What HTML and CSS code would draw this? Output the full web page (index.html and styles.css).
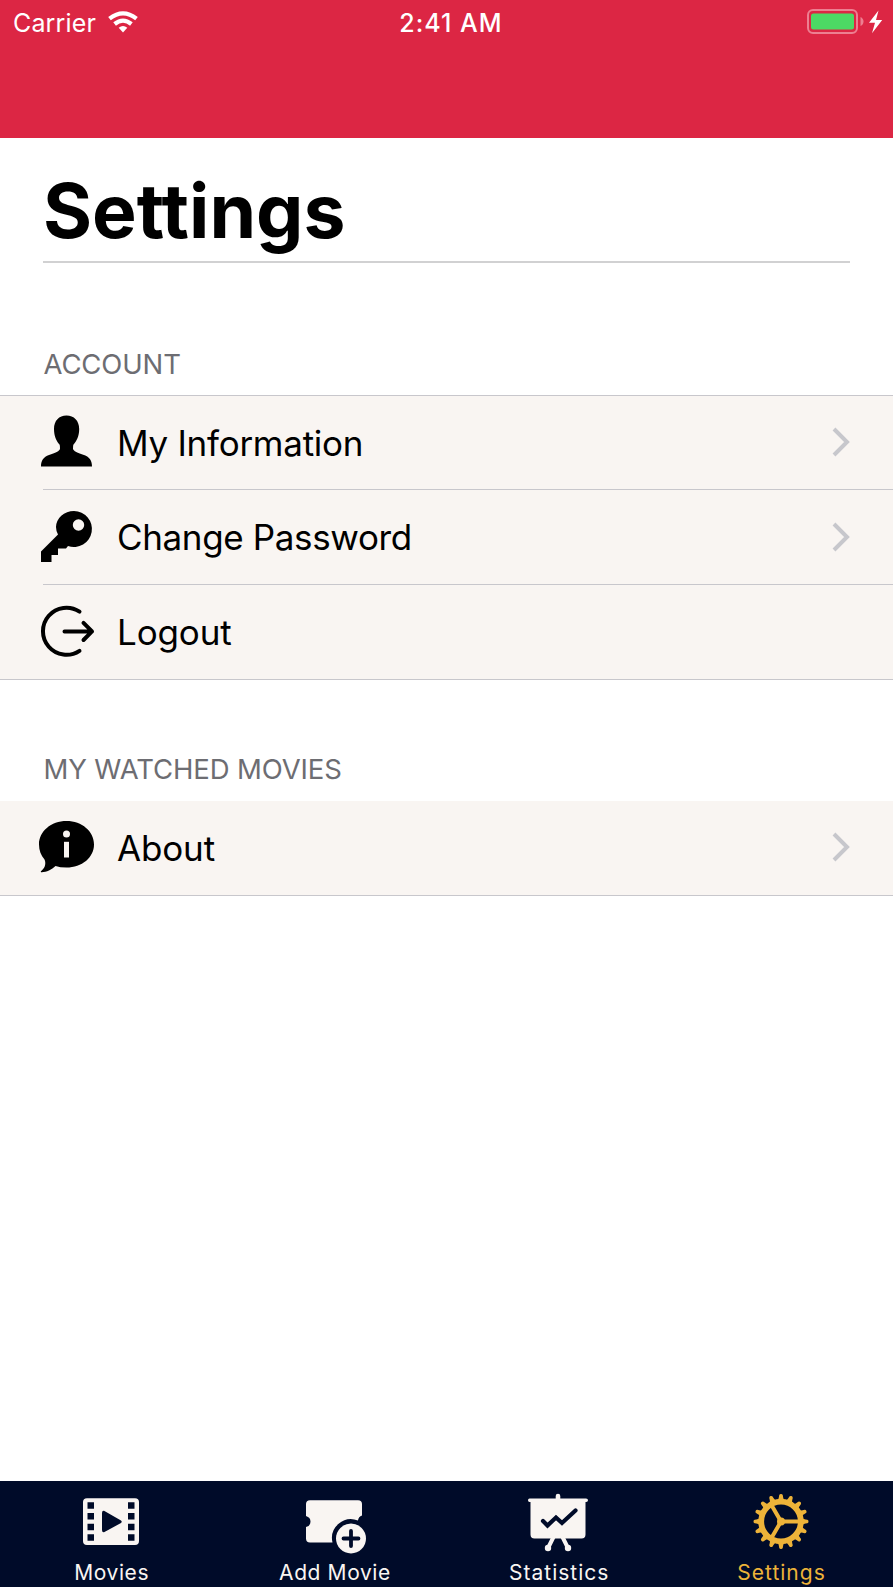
FILE: index.html
```html
<!DOCTYPE html>
<html lang="en">
<head>
<meta charset="utf-8">
<title>Settings</title>
<link rel="stylesheet" href="styles.css">
</head>
<body>
<div class="screen">
  <header class="navbar">
    <div class="status">
      <div class="status-left">
        <span class="carrier">Carrier</span>
        <svg class="wifi" width="30" height="22" viewBox="0 0 30 22"><g fill="none" stroke="#fff" stroke-width="4.2"><path d="M1.5 7.6Q15-3 28.500 7.600"/><path d="M6.600 13Q15 6.200 23.400 13"/></g><path d="M10.700 16.800Q15 13.200 19.300 16.800L15 21.500Z" fill="#fff"/></svg>
      </div>
      <span class="time">2:41 AM</span>
      <div class="status-right">
        <svg width="77" height="26" viewBox="0 0 77 26"><rect x="1" y="1" width="49" height="23" rx="5" fill="none" stroke="#ed7f91" stroke-width="2"/><rect x="4" y="4.500" width="43" height="16" rx="2.500" fill="#4cd964"/><path d="M53.500 8Q56.500 9.500 56.500 12.500T53.500 17Z" fill="#ed7f91"/><path d="M71.500 1.500L62 13.800H68L65 24.300L75.200 11H69Z" fill="#fff"/></svg>
      </div>
    </div>
  </header>
  <main class="content">
    <h1 class="title"><span>Settings</span></h1>
    <section class="group">
      <h2 class="group-title account">ACCOUNT</h2>
      <ul class="list ruled">
        <li class="row">
          <svg class="icon" width="58" height="58" viewBox="0 0 58 58"><path d="M28.500 3.500C36 3.500 41.200 8.800 41.200 17C41.200 24 38.500 29.500 35.500 32.500Q35 33 35 36.500C35 39 40 41 46 43C51.500 45 54 48.500 54 54.500H3C3 48.500 5.500 45 11 43C17 41 22 39 22 36.500Q22 33 21.500 32.500C18.500 29.500 16 24 16 17C16 8.800 21 3.500 28.500 3.500Z"/></svg>
          <span class="label info">My Information</span>
          <svg class="chevron" width="18" height="30" viewBox="0 0 18 30"><path d="M2 2L15 15L2 28"/></svg>
        </li>
        <li class="row">
          <svg class="icon" width="58" height="58" viewBox="0 0 58 58"><path fill-rule="evenodd" d="M36 4A18 18 0 1 1 30 39L28 41.500H20V48H13.500V55H3V44.500L20 27.500Q18 24 18 20A18 16 0 0 1 36 4ZM40.500 12.300A5.700 5.700 0 1 0 40.500 23.700A5.700 5.700 0 1 0 40.500 12.300Z"/></svg>
          <span class="label password">Change Password</span>
          <svg class="chevron" width="18" height="30" viewBox="0 0 18 30"><path d="M2 2L15 15L2 28"/></svg>
        </li>
        <li class="row">
          <svg class="icon line-icon" width="58" height="58" viewBox="0 0 58 58"><path d="M41.500 9.700A23.500 23.500 0 1 0 41.500 48.800M26.500 29.400H54M45.500 20.900L54 29.400L45.500 38"/></svg>
          <span class="label logout">Logout</span>
        </li>
      </ul>
    </section>
    <section class="group second">
      <h2 class="group-title watched">MY WATCHED MOVIES</h2>
      <ul class="list">
        <li class="row">
          <svg class="icon" width="58" height="58" viewBox="0 0 58 58"><path d="M28.500 4C44 4 56 14.500 56 27.500S44 50.500 28.500 50.500Q22 50.500 17.500 49C13.500 52.800 8 55.500 3 55.200Q2 54.500 4 53.200C7.500 50.500 8 45.500 6.500 42.500C3 38.500 1 33.500 1 27.500C1 14.500 13 4 28.500 4Z"/><circle cx="28.500" cy="17" r="3.500" fill="#f9f5f2"/><path d="M26 24.800H31V40.500H26Z" fill="#f9f5f2"/></svg>
          <span class="label about">About</span>
          <svg class="chevron" width="18" height="30" viewBox="0 0 18 30"><path d="M2 2L15 15L2 28"/></svg>
        </li>
      </ul>
    </section>
  </main>
  <nav class="tabs">
    <div class="tab nudge">
      <svg width="64" height="62" viewBox="0 0 64 62"><path fill="#f9f5f2" fill-rule="evenodd" d="M8 6.200H56Q60 6.200 60 10V49Q60 53 56 53H8Q4 53 4 49V10Q4 6.200 8 6.200ZM8.500 10.300V16.800H15V10.300ZM8.500 21V27.500H15V21ZM8.500 31.700V38.200H15V31.700ZM8.500 42.300V48.800H15V42.300ZM49 10.300V16.800H55.500V10.300ZM49 21V27.500H55.500V21ZM49 31.700V38.200H55.500V31.700ZM49 42.300V48.800H55.500V42.300ZM25 18.800Q23 18.500 23 21V38Q23 40.500 25 40.200L42 31Q43.500 29.800 42 28.500Z"/></svg>
      <span class="movies">Movies</span>
    </div>
    <div class="tab nudge">
      <svg width="64" height="62" viewBox="0 0 64 62"><path fill="#f9f5f2" d="M8 8.200H56Q60 8.200 60 12V23.500Q56.500 24.500 56 28.500A19 19 0 0 0 30.500 50.500H8Q4 50.500 4 46.500V35Q8.500 34 8.500 29.700T4 24V12Q4 8.200 8 8.200Z"/><circle cx="49" cy="46.500" r="15" fill="#f9f5f2"/><path d="M49 39V54M41.500 46.500H56.500" stroke="#000b29" stroke-width="3.800" stroke-linecap="round"/></svg>
      <span class="add">Add Movie</span>
    </div>
    <div class="tab">
      <svg width="64" height="62" viewBox="0 0 64 62"><path fill="#f9f5f2" d="M3.500 6.500H29.700V4Q29.700 1.700 32 1.700T34.300 4V6.500H60Q62 6.500 62 8.300T60 10H59.500V42.500Q59.500 46.500 55.500 46.500H8.500Q4.500 46.500 4.500 42.500V10H3.500Q2 10 2 8.300T3.500 6.500Z"/><path d="M28 44L22.300 55.500M36 44L41.700 55.500" stroke="#f9f5f2" stroke-width="4"/><circle cx="22" cy="56" r="3.200" fill="#f9f5f2"/><circle cx="42" cy="56" r="3.200" fill="#f9f5f2"/><path d="M17 29L21.500 33.500L30 25.500L36 31L49.500 18.500" fill="none" stroke="#000b29" stroke-width="4.200" stroke-linecap="round" stroke-linejoin="miter"/></svg>
      <span class="stats">Statistics</span>
    </div>
    <div class="tab nudge active">
      <svg width="64" height="62" viewBox="0 0 64 62">
        <defs><path id="tooth" d="M27.500 9C29.800 7.800 29.800 5.500 30.200 3.200Q30.500 2 32 2T33.800 3.200C34.200 5.500 34.200 7.800 36.500 9Z"/><g id="teeth"><use href="#tooth"/><use href="#tooth" transform="rotate(22.500 32 29.500)"/><use href="#tooth" transform="rotate(45 32 29.500)"/><use href="#tooth" transform="rotate(67.500 32 29.500)"/></g></defs>
        <g fill="#edb339"><use href="#teeth"/><use href="#teeth" transform="rotate(90 32 29.500)"/><use href="#teeth" transform="rotate(180 32 29.500)"/><use href="#teeth" transform="rotate(270 32 29.500)"/><circle cx="32" cy="29.500" r="4"/></g>
        <g fill="none" stroke="#edb339"><circle cx="32" cy="29.500" r="19.800" stroke-width="5.800"/><path d="M32 29.500H50M32 29.500L23 13.900M32 29.500L23 45.100" stroke-width="4"/></g>
      </svg>
      <span class="settings">Settings</span>
    </div>
  </nav>
</div>
</body>
</html>
```
FILE: styles.css
```css
* { box-sizing: border-box; }
body { margin: 0; background: #fff; color: #000; font-family: Inter, sans-serif; }
.screen { display: flex; flex-direction: column; width: 893px; height: 1587px; overflow: hidden; }
.navbar { height: 138px; background: #dc2644; }
.status { display: grid; grid-template-columns: 1fr auto 1fr; align-items: start; height: 46px; padding: 9px 9px 0 13px; color: #fff; font-size: 25px; line-height: 28px; white-space: nowrap; }
.status-left { display: flex; gap: 12px; }
.carrier { letter-spacing: 0.15px; }
.wifi { margin-top: 2px; }
.time { margin-left: 5px; font-weight: 500; letter-spacing: 1px; }
.status-right { display: flex; justify-content: flex-end; }
.content { flex: 1; }
.title { height: 125px; margin: 0 43px; padding-top: 29px; border-bottom: 2px solid #d1d1d2; font-size: 75px; line-height: 88px; font-weight: 700; }
.group { padding-top: 84px; }
.group-title { height: 48px; margin: 0; padding: 0 43.5px; color: #6d6d72; font-size: 27.5px; line-height: 34px; font-weight: 400; letter-spacing: -0.13px; white-space: nowrap; }
.list { margin: 0; padding: 0; list-style: none; background: #f9f5f2; border-bottom: 1px solid #c8c7cc; }
.ruled { border-top: 1px solid #c8c7cc; }
.row { position: relative; display: flex; align-items: center; height: 95px; padding: 0 43px 2px 38px; font-size: 35px; line-height: 42px; white-space: nowrap; }
.row:first-child, .row:last-child { height: 94px; }
.ruled .row:last-child { padding-bottom: 0; }
.row + .row::before { content: ""; position: absolute; top: -1px; left: 43px; right: 0; height: 1px; background: #c8c7cc; }
.icon { margin-bottom: 2px; }
.label { margin-left: 21px; }
.info { margin-top: 2px; letter-spacing: -0.27px; }
.password { letter-spacing: -0.36px; }
.logout, .about { letter-spacing: -0.15px; }
.about { margin-top: 2px; }
.line-icon { fill: none; stroke: #000; stroke-width: 4; stroke-linecap: round; stroke-linejoin: round; }
.chevron { margin-left: auto; fill: none; stroke: #c7c7cc; stroke-width: 4; }
.second { padding-top: 72px; }
.second .group-title { height: 49px; }
.tabs { display: grid; grid-template-columns: repeat(4, 223.3px); height: 106px; background: #000b29; color: #f9f5f2; }
.tab { display: flex; flex-direction: column; align-items: center; padding-top: 11px; font-size: 21px; line-height: 26px; }
.nudge { padding-right: 2px; }
.tab span { margin: 6px 0 0 2px; }
.movies, .add { letter-spacing: 0.6px; }
.stats, .settings { letter-spacing: 1px; }
.active { color: #edb339; }
```
